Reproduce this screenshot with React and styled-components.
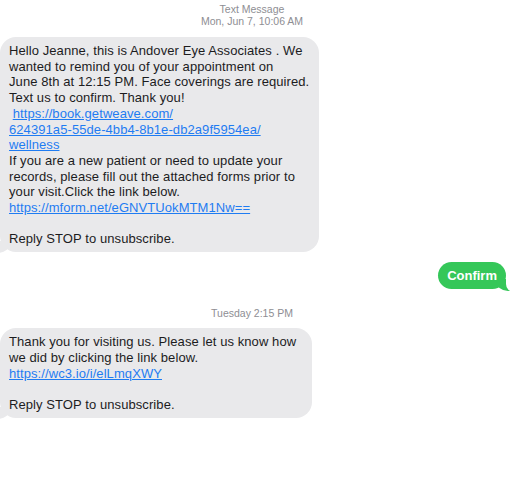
import React from 'react'
import styled, { createGlobalStyle } from 'styled-components'

const GlobalStyle = createGlobalStyle`
  body {
    margin: 0;
    background: #fff;
    font-family: "Liberation Sans", Arial, sans-serif;
  }
`

const Thread = styled.div`
  width: 512px;
  height: 486px;
  display: flex;
  flex-direction: column;
  overflow: hidden;
`

const Stamp = styled.div`
  text-align: center;
  font-size: 10.5px;
  line-height: 12px;
  color: #8e8e93;
  padding-right: 8px;
  margin-top: ${p => p.top || 0}px;
`

const Row = styled.div`
  display: flex;
  justify-content: ${p => (p.mine ? 'flex-end' : 'flex-start')};
  margin-top: ${p => p.top || 0}px;
  padding-right: ${p => (p.mine ? 6 : 0)}px;
`

const Bubble = styled.div`
  position: relative;
  width: ${p => p.w}px;
  box-sizing: border-box;
  padding: 6px 8px 5px 9px;
  background: #e9e9eb;
  border-radius: 16px;
  color: #1c1c1e;
  font-size: 13px;
  line-height: 15.7px;
  letter-spacing: 0.08px;
  white-space: nowrap;

  &::before {
    content: '';
    position: absolute;
    left: -4px;
    bottom: -1px;
    width: 14px;
    height: 12px;
    background: #e9e9eb;
    border-bottom-right-radius: 12px 10px;
  }
  &::after {
    content: '';
    position: absolute;
    left: -10px;
    bottom: -2px;
    width: 10px;
    height: 14px;
    background: #fff;
    border-bottom-right-radius: 8px;
  }
`

const Sent = styled.div`
  position: relative;
  background: #35c759;
  color: #fff;
  font-weight: 700;
  font-size: 13px;
  line-height: 17px;
  padding: 5px 9px;
  border-radius: 14px;

  &::before {
    content: '';
    position: absolute;
    right: -4px;
    bottom: -2px;
    width: 14px;
    height: 12px;
    background: #35c759;
    border-bottom-left-radius: 12px 10px;
  }
  &::after {
    content: '';
    position: absolute;
    right: -10px;
    bottom: -3px;
    width: 10px;
    height: 14px;
    background: #fff;
    border-bottom-left-radius: 8px;
  }
`

const Body = styled.div`
  position: relative;
  z-index: 1;
`

const Link = styled.a`
  color: #1f7cf2;
  text-decoration: underline;
`

const Gap = styled.div`
  height: 15.7px;
`

export default function App() {
  return (
    <Thread>
      <GlobalStyle />
      <Stamp top={3}>Text Message</Stamp>
      <Stamp>Mon, Jun 7, 10:06 AM</Stamp>

      <Row top={10}>
        <Bubble w={319}>
          <Body>
            Hello Jeanne, this is Andover Eye Associates . We<br />
            wanted to remind you of your appointment on<br />
            June 8th at 12:15 PM. Face coverings are required.<br />
            Text us to confirm. Thank you!<br />
            &nbsp;<Link>https://book.getweave.com/</Link><br />
            <Link>624391a5-55de-4bb4-8b1e-db2a9f5954ea/</Link><br />
            <Link>wellness</Link><br />
            If you are a new patient or need to update your<br />
            records, please fill out the attached forms prior to<br />
            your visit.Click the link below.<br />
            <Link>https://mform.net/eGNVTUokMTM1Nw==</Link>
            <Gap />
            Reply STOP to unsubscribe.
          </Body>
        </Bubble>
      </Row>

      <Row mine top={10}>
        <Sent>
          <Body>Confirm</Body>
        </Sent>
      </Row>

      <Stamp top={18}>Tuesday 2:15 PM</Stamp>

      <Row top={9}>
        <Bubble w={312}>
          <Body>
            Thank you for visiting us. Please let us know how<br />
            we did by clicking the link below.<br />
            <Link>https://wc3.io/i/elLmqXWY</Link>
            <Gap />
            Reply STOP to unsubscribe.
          </Body>
        </Bubble>
      </Row>
    </Thread>
  )
}
